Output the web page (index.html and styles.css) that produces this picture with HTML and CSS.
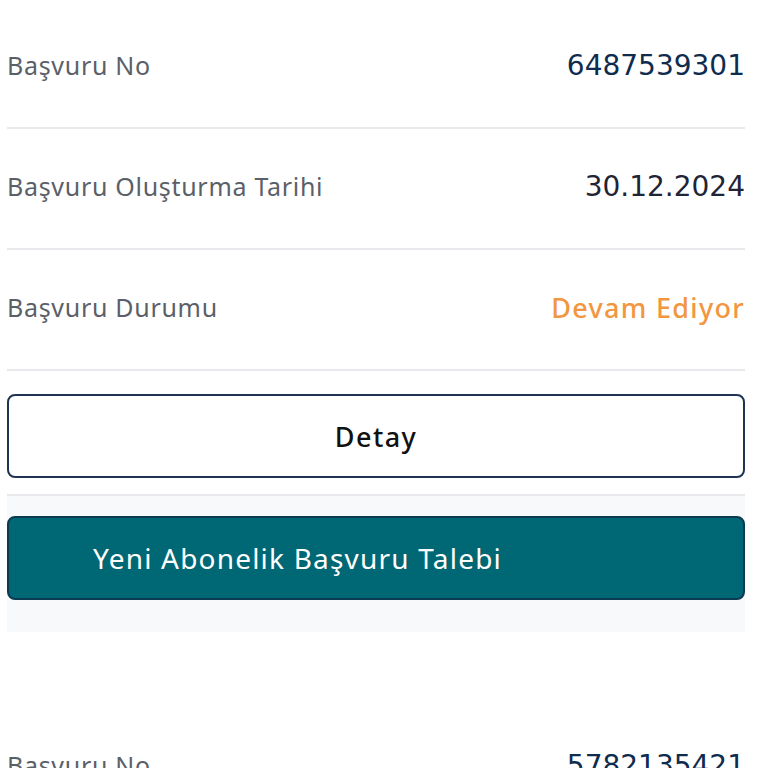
FILE: index.html
```html
<!DOCTYPE html>
<html lang="tr">
<head>
    <meta charset="UTF-8">
    <title>Başvurularım</title>
    <link rel="stylesheet" href="styles.css">
</head>
<body>
    <div class="list">
        <!-- başvuru kartı -->
        <div class="card">
            <div class="row">
                <span class="label">Başvuru No</span>
                <span class="value value-no">6487539301</span>
            </div>
            <div class="row">
                <span class="label">Başvuru Oluşturma Tarihi</span>
                <span class="value">30.12.2024</span>
            </div>
            <div class="row">
                <span class="label">Başvuru Durumu</span>
                <span class="status">Devam Ediyor</span>
            </div>
            <div class="actions">
                <button class="btn-outline">Detay</button>
            </div>
            <div class="footer">
                <button class="btn-primary">Yeni Abonelik Başvuru Talebi</button>
            </div>
        </div>

        <div class="card">
            <div class="row">
                <span class="label">Başvuru No</span>
                <span class="value value-no">5782135421</span>
            </div>
        </div>
    </div>
</body>
</html>
```

FILE: styles.css
```css
:root {
    --text-gray: #5b5f68;
    --navy: #0f2c4f;
    --dark: #1f2535;
    --orange: #f2963f;
    --teal: #006774;
    --divider: #e8e9ec;
    --footer-bg: #f8f9fb;
}

body {
    margin: 0;
    background: #fff;
    font-family: "Noto Sans", "Open Sans", sans-serif;
    overflow: hidden;
}

.list {
    width: 738px;
    padding: 8px 0 0 7px;
}

.card {
    margin-bottom: 76px;
}

.row {
    display: flex;
    justify-content: space-between;
    align-items: center;
    height: 34px;
    padding: 40px 0 45px;
    border-bottom: 2px solid var(--divider);
}

.label {
    font-size: 25px;
    letter-spacing: 0.7px;
    color: var(--text-gray);
}

.value {
    font-family: "DejaVu Sans", sans-serif;
    font-size: 28px;
    color: var(--dark);
}

.value-no {
    color: var(--navy);
}

.status {
    font-size: 27px;
    font-weight: 500;
    letter-spacing: 1.3px;
    color: var(--orange);
}

.actions {
    padding: 23px 0 16px;
    border-bottom: 2px solid var(--divider);
}

button {
    display: block;
    width: 100%;
    height: 84px;
    border-radius: 8px;
    font-family: "Noto Sans", "Open Sans", sans-serif;
    cursor: pointer;
}

.btn-outline {
    background: #fff;
    border: 2px solid #1e3452;
    font-size: 27px;
    font-weight: 500;
    letter-spacing: 1.4px;
    color: #111;
}

.footer {
    background: var(--footer-bg);
    padding: 20px 0 32px;
}

.btn-primary {
    background: var(--teal);
    border: 2px solid #0b3a52;
    color: #fff;
    font-size: 28px;
    letter-spacing: 1.2px;
    text-align: left;
    padding-left: 84px;
}
```
